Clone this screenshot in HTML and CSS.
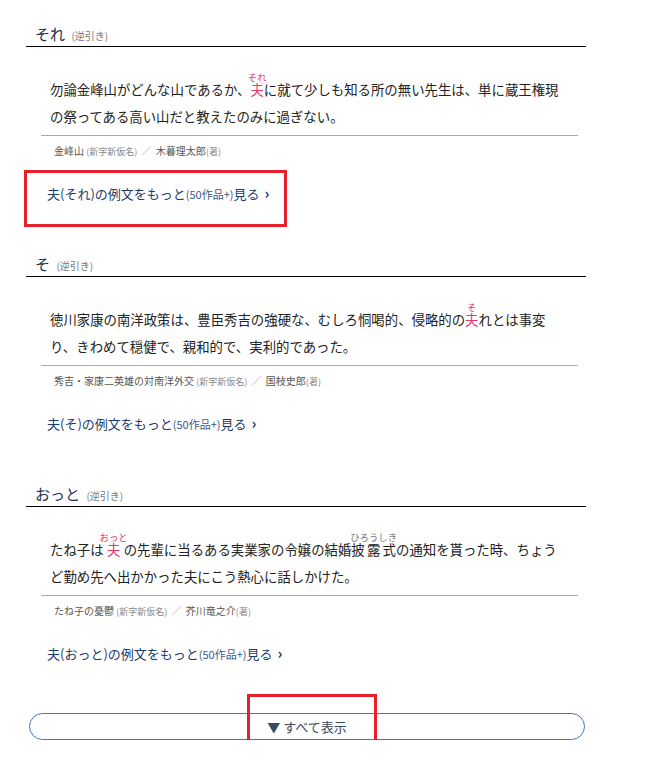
FILE: index.html
```html
<!DOCTYPE html>
<html lang="ja">
<head>
  <meta charset="UTF-8">
  <meta name="viewport" content="width=device-width, initial-scale=1.0">
  <title>夫の例文</title>
  <link rel="stylesheet" href="styles.css">
</head>
<body>
  <div class="wrap">

    <div class="section">
      <h2 class="yomi">それ <span class="rev">(逆引き)</span></h2>
      <p class="sentence">勿論金峰山がどんな山であるか、<ruby class="hl">夫<rt>それ</rt></ruby>に就て少しも知る所の無い先生は、単に蔵王権現の祭ってある高い山だと教えたのみに過ぎない。</p>
      <div class="source">金峰山 <span class="kana">(新字新仮名)</span> <span class="slash">／</span> 木暮理太郎<span class="kana">(著)</span></div>
      <a class="more" href="#">夫(それ)の例文をもっと<span class="count">(50作品+)</span>見る <span class="chev">›</span></a>
    </div>

    <div class="section">
      <h2 class="yomi">そ <span class="rev">(逆引き)</span></h2>
      <p class="sentence">徳川家康の南洋政策は、豊臣秀吉の強硬な、むしろ恫喝的、侵略的の<ruby class="hl">夫<rt>そ</rt></ruby>れとは事変り、きわめて穏健で、親和的で、実利的であった。</p>
      <div class="source">秀吉・家康二英雄の対南洋外交 <span class="kana">(新字新仮名)</span> <span class="slash">／</span> 国枝史郎<span class="kana">(著)</span></div>
      <a class="more" href="#">夫(そ)の例文をもっと<span class="count">(50作品+)</span>見る <span class="chev">›</span></a>
    </div>

    <div class="section">
      <h2 class="yomi">おっと <span class="rev">(逆引き)</span></h2>
      <p class="sentence">たね子は<ruby class="hl">夫<rt>おっと</rt></ruby>の先輩に当るある実業家の令嬢の結婚<ruby class="plain">披露式<rt>ひろうしき</rt></ruby>の通知を貰った時、ちょうど勤め先へ出かかった夫にこう熱心に話しかけた。</p>
      <div class="source">たね子の憂鬱 <span class="kana">(新字新仮名)</span> <span class="slash">／</span> 芥川竜之介<span class="kana">(著)</span></div>
      <a class="more" href="#">夫(おっと)の例文をもっと<span class="count">(50作品+)</span>見る <span class="chev">›</span></a>
    </div>

    <button class="show-all">▼ すべて表示</button>

    <div class="mark mark-more"></div>
    <div class="mark mark-all"></div>
  </div>
</body>
</html>
```

FILE: styles.css
```css
body {
  margin: 0;
  font-family: "Noto Sans CJK JP", "Noto Sans", sans-serif;
  color: #222;
  background: #fff;
}
.wrap {
  position: relative;
  width: 560px;
  margin-left: 26px;
  padding-top: 24px;
}
.section {
  padding-bottom: 50px;
}
.yomi {
  margin: 0;
  padding: 0 0 2px 9px;
  font-size: 15px;
  font-weight: normal;
  line-height: 20px;
  color: #1c2f4f;
  border-bottom: 1px solid #000;
}
.rev {
  font-size: 10px;
  line-height: 1;
  color: #777;
  margin-left: 3px;
}
.sentence {
  margin: 25px 0 0;
  padding: 0 0 5px 24px;
  width: 510px;
  font-size: 13.4px;
  line-height: 27px;
  color: #222;
  text-spacing-trim: space-all;
}
ruby rt {
  font-size: 9.4px;
  line-height: 1;
}
.hl {
  color: #e8366e;
}
.plain rt {
  color: #777;
}
.source {
  margin-left: 15px;
  width: 537px;
  border-top: 1px solid #aaa;
  padding: 7px 0 0 13px;
  box-sizing: border-box;
  font-size: 10px;
  line-height: 16px;
  color: #555;
}
.kana {
  font-size: 9px;
  line-height: 1;
  color: #888;
}
.slash {
  color: #999;
  margin: 0 2px;
}
.more {
  display: block;
  margin: 25px 0 0 21px;
  font-size: 13px;
  line-height: 20px;
  color: #1d3c6a;
  text-decoration: none;
}
.count {
  font-size: 11px;
  line-height: 1;
  color: #3c5a86;
}
.chev {
  font-size: 15px;
  line-height: 1;
  font-weight: bold;
  margin-left: 2px;
}
.show-all {
  display: block;
  margin: -1px 0 0 3px;
  width: 556px;
  height: 27px;
  border: 1px solid #4a72b5;
  border-radius: 14px;
  background: #fff;
  font-family: inherit;
  font-size: 13px;
  color: #3a4a62;
  padding: 0;
}
.mark {
  position: absolute;
  border: 3px solid #e8202a;
}
.mark-more {
  left: -2px;
  top: 170px;
  width: 257px;
  height: 51px;
}
.mark-all {
  left: 221px;
  top: 694px;
  width: 124px;
  height: 59px;
}
```
